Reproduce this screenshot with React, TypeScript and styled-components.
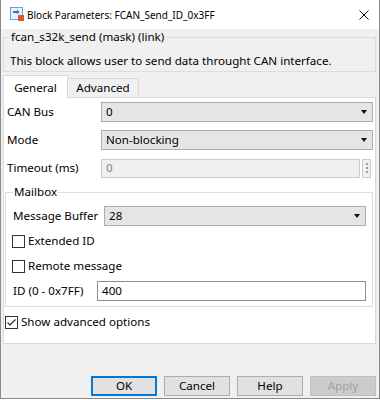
import styled, { createGlobalStyle } from "styled-components";

const GlobalStyle = createGlobalStyle`
  html, body {
    margin: 0;
    padding: 0;
    background: #ffffff;
  }
  body {
    font-family: "Noto Sans", "Liberation Sans", sans-serif;
    font-size: 11.6px;
    line-height: 16px;
    color: #000;
  }
`;

interface CheckProps {
  checked?: boolean;
  label: string;
  inset?: boolean;
}

const Check = ({ checked, label, inset }: CheckProps) => (
  <CheckRow $inset={inset}>
    <Box>
      {checked && (
        <svg width="11" height="11" viewBox="0 0 11 11">
          <path d="M1.5 5.5 L4 8 L9.5 2.5" fill="none" stroke="#222" strokeWidth="1.1" />
        </svg>
      )}
    </Box>
    <span>{label}</span>
  </CheckRow>
);

const Combo = ({ value }: { value: string }) => (
  <Select>
    <span>{value}</span>
    <Arrow />
  </Select>
);

export default function App() {
  return (
    <>
      <GlobalStyle />
      <Window>
        <TitleBar>
          <svg width="15" height="15" viewBox="0 0 15 15">
            <rect x="0.5" y="0.5" width="12" height="12" fill="#e8f2fb" stroke="#6a9fd4" />
            <path d="M3 4 H7 V2.5 L9.5 5 L7 7.5 V6 H3 Z" fill="#2b79c2" />
            <rect x="8" y="8" width="6" height="6" fill="#e0542b" />
          </svg>
          <Title>Block Parameters: FCAN_Send_ID_0x3FF</Title>
          <Close>
            <svg width="10" height="10" viewBox="0 0 10 10">
              <path d="M0.5 0.5 L9.5 9.5 M9.5 0.5 L0.5 9.5" stroke="#111" strokeWidth="1" />
            </svg>
          </Close>
        </TitleBar>

        <Body>
          <MaskGroup>
            <Legend>fcan_s32k_send (mask) (link)</Legend>
            <Description>This block allows user to send data throught CAN interface.</Description>
          </MaskGroup>

          <Tabs>
            <Tab $active>General</Tab>
            <Tab>Advanced</Tab>
          </Tabs>

          <Panel>
            <FormRow>
              <span>CAN Bus</span>
              <Combo value="0" />
            </FormRow>
            <FormRow>
              <span>Mode</span>
              <Combo value="Non-blocking" />
            </FormRow>
            <FormRow>
              <span>Timeout (ms)</span>
              <SpinWrap>
                <DisabledInput>0</DisabledInput>
                <Spinner>
                  <i />
                  <i />
                  <i />
                </Spinner>
              </SpinWrap>
            </FormRow>

            <Mailbox>
              <Legend>Mailbox</Legend>
              <InnerRow $labelWidth={91}>
                <span>Message Buffer</span>
                <Combo value="28" />
              </InnerRow>
              <Check inset label="Extended ID" />
              <Check inset label="Remote message" />
              <InnerRow $labelWidth={84}>
                <span>ID (0 - 0x7FF)</span>
                <TextInput>400</TextInput>
              </InnerRow>
            </Mailbox>

            <Advanced>
              <Check checked label="Show advanced options" />
            </Advanced>
          </Panel>

          <Buttons>
            <Button $focused>OK</Button>
            <Button>Cancel</Button>
            <Button>Help</Button>
            <Button $disabled>Apply</Button>
          </Buttons>
        </Body>
      </Window>
    </>
  );
}

const Window = styled.div`
  width: 380px;
  height: 399px;
  box-sizing: border-box;
  background: #f0f0f0;
  border: 1px solid #8a8a8a;
  border-top: none;
  display: flex;
  flex-direction: column;
`;

const TitleBar = styled.div`
  height: 29px;
  flex-shrink: 0;
  background: #ffffff;
  display: flex;
  align-items: center;
  padding: 0 10px 0 9px;
  gap: 2px;
`;

const Title = styled.span`
  flex: 1;
  font-size: 10px;
  padding-top: 1px;
`;

const Close = styled.span`
  display: flex;
  padding-top: 1px;
`;

const Body = styled.div`
  flex: 1;
  display: flex;
  flex-direction: column;
  padding: 0 3px 0 2px;
`;

const MaskGroup = styled.fieldset`
  margin: 0;
  padding: 0 6px 2px;
  border: 1px solid #dcdcdc;
  min-width: 0;
`;

const Legend = styled.legend`
  padding: 0 2px;
  margin-left: -1px;
  line-height: 16px;
`;

const Description = styled.div`
  padding-top: 8px;
`;

const Tabs = styled.div`
  display: flex;
  align-items: flex-end;
  margin-top: 3px;
  height: 23px;
  position: relative;
  z-index: 1;
  margin-bottom: -1px;
`;

const Tab = styled.div<{ $active?: boolean }>`
  box-sizing: border-box;
  width: ${(p) => (p.$active ? "65px" : "72px")};
  height: ${(p) => (p.$active ? "23px" : "20px")};
  padding-top: ${(p) => (p.$active ? "2px" : "0")};
  display: flex;
  align-items: center;
  justify-content: center;
  background: ${(p) => (p.$active ? "#ffffff" : "#f0f0f0")};
  border: 1px solid #d9d9d9;
  border-bottom-color: ${(p) => (p.$active ? "#ffffff" : "#d9d9d9")};
  margin-left: ${(p) => (p.$active ? "0" : "-1px")};
`;

const Panel = styled.div`
  box-sizing: border-box;
  height: 247px;
  background: #ffffff;
  border: 1px solid #d9d9d9;
  padding: 4px 2px 0 1px;
  display: flex;
  flex-direction: column;
  gap: 8px;
`;

const FormRow = styled.div`
  display: grid;
  grid-template-columns: 94px 1fr;
  align-items: center;
  padding-left: 2px;
  height: 20px;
`;

const Select = styled.div`
  box-sizing: border-box;
  height: 20px;
  background: #e5e5e5;
  border: 1px solid #adadad;
  display: flex;
  align-items: center;
  justify-content: space-between;
  padding: 0 5px 0 4px;
`;

const Arrow = styled.span`
  width: 0;
  height: 0;
  border-left: 3.5px solid transparent;
  border-right: 3.5px solid transparent;
  border-top: 4px solid #111;
`;

const SpinWrap = styled.div`
  display: flex;
  gap: 2px;
  padding-right: 2px;
`;

const DisabledInput = styled.div`
  flex: 1;
  box-sizing: border-box;
  height: 19px;
  background: #f0f0f0;
  border: 1px solid #cccccc;
  color: #838383;
  padding-left: 4px;
  display: flex;
  align-items: center;
`;

const Spinner = styled.div`
  box-sizing: border-box;
  width: 9px;
  height: 19px;
  border: 1px solid #cccccc;
  background: #f0f0f0;
  display: flex;
  flex-direction: column;
  align-items: center;
  justify-content: center;
  gap: 2px;

  i {
    width: 2px;
    height: 2px;
    background: #9a9a9a;
  }
`;

const Mailbox = styled.fieldset`
  margin: -2px 0 0;
  padding: 6px 6px 5px 7px;
  border: 1px solid #dcdcdc;
  min-width: 0;
  display: flex;
  flex-direction: column;
  gap: 5px;

  legend {
    margin-left: 0;
    padding: 0 1px;
  }
`;

const InnerRow = styled.div<{ $labelWidth: number }>`
  display: grid;
  grid-template-columns: ${(p) => p.$labelWidth}px 1fr;
  align-items: center;
  height: 20px;
`;

const CheckRow = styled.div<{ $inset?: boolean }>`
  display: flex;
  align-items: center;
  gap: 3px;
  height: 20px;
  margin-left: ${(p) => (p.$inset ? "-1px" : "0")};
`;

const Box = styled.span`
  box-sizing: border-box;
  width: 13px;
  height: 13px;
  border: 1px solid #333333;
  background: #ffffff;
  display: flex;
  align-items: center;
  justify-content: center;
`;

const TextInput = styled.div`
  box-sizing: border-box;
  height: 20px;
  background: #ffffff;
  border: 1px solid #8f8f8f;
  padding-left: 4px;
  display: flex;
  align-items: center;
`;

const Advanced = styled.div`
  margin-top: -3px;
`;

const Buttons = styled.div`
  margin-top: auto;
  display: flex;
  justify-content: flex-end;
  gap: 7px;
  padding-bottom: 2px;
`;

const Button = styled.div<{ $focused?: boolean; $disabled?: boolean }>`
  box-sizing: border-box;
  width: 66px;
  height: 20px;
  display: flex;
  align-items: center;
  justify-content: center;
  background: ${(p) => (p.$disabled ? "#cccccc" : "#e1e1e1")};
  color: ${(p) => (p.$disabled ? "#a0a0a0" : "#000")};
  border: 1px solid
    ${(p) => (p.$focused ? "#0078d7" : p.$disabled ? "#bfbfbf" : "#adadad")};
  box-shadow: ${(p) => (p.$focused ? "inset 0 0 0 1px #0078d7" : "none")};
`;
